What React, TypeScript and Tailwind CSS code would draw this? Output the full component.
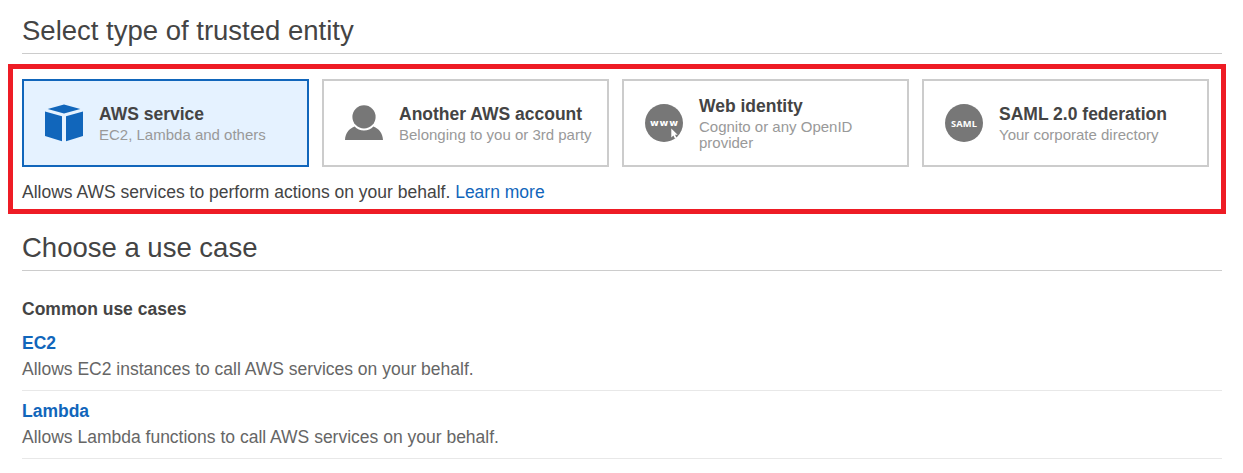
import React from "react";

type Entity = {
  title: string;
  detail: string;
  icon: React.ReactNode;
  selected?: boolean;
};

type UseCase = { name: string; description: string };

function CubeIcon() {
  return (
    <svg width="38" height="38" viewBox="0 0 38 38" fill="#1166bb">
      <path d="M19 0.5 35.3 5.1 19 9.6 2.7 5.1z" />
      <path d="M0 7.4 17 12.2V37.2L0 32z" />
      <path d="M38 7.4 21 12.2V37.2L38 32z" />
    </svg>
  );
}

function PersonIcon() {
  return (
    <svg width="38" height="38" viewBox="0 0 38 38" fill="#777777">
      <circle cx="19" cy="12.9" r="11.6" />
      <path d="M0 36C0.3 29.6 3.6 24.9 9.6 22.6C12 25.2 15.2 26.5 19 26.5C22.8 26.5 26 25.2 28.4 22.6C34.4 24.9 37.7 29.6 38 36z" />
    </svg>
  );
}

function WebIcon() {
  return (
    <svg width="38" height="38" viewBox="0 0 38 38">
      <circle cx="19" cy="19" r="19" fill="#777777" />
      <text
        x="19"
        y="21.5"
        textAnchor="middle"
        textLength="28"
        className="font-['DejaVu_Sans',sans-serif] text-[9.5px] font-bold"
        fill="#ffffff"
      >
        www
      </text>
      <path d="M26.3 24.6V33.4L28.4 31.5L29.9 34.6L31.5 33.8L30 30.8H32.6z" fill="#ffffff" />
    </svg>
  );
}

function SamlIcon() {
  return (
    <svg width="38" height="38" viewBox="0 0 38 38">
      <circle cx="19" cy="19" r="19" fill="#777777" />
      <text
        x="19"
        y="22.9"
        textAnchor="middle"
        textLength="26"
        className="font-['Open_Sans',sans-serif] text-[9.3px] font-bold"
        fill="#ffffff"
      >
        SAML
      </text>
    </svg>
  );
}

const entities: Entity[] = [
  { title: "AWS service", detail: "EC2, Lambda and others", icon: <CubeIcon />, selected: true },
  { title: "Another AWS account", detail: "Belonging to you or 3rd party", icon: <PersonIcon /> },
  { title: "Web identity", detail: "Cognito or any OpenID provider", icon: <WebIcon /> },
  { title: "SAML 2.0 federation", detail: "Your corporate directory", icon: <SamlIcon /> },
];

const useCases: UseCase[] = [
  { name: "EC2", description: "Allows EC2 instances to call AWS services on your behalf." },
  { name: "Lambda", description: "Allows Lambda functions to call AWS services on your behalf." },
];

function SectionHeading({ children }: { children: React.ReactNode }) {
  return (
    <h2 className="mx-[14px] h-[54px] w-[1200px] border-b border-[#cccccc] pt-[15px] text-[27.5px] leading-8 font-normal">
      {children}
    </h2>
  );
}

function EntityCard({ title, detail, icon, selected }: Entity) {
  return (
    <button
      type="button"
      className={
        selected
          ? "flex h-[88px] w-[287px] items-center gap-4 border-2 border-[#1166bb] bg-[#e5f2ff] pr-[14px] pl-[21px] text-left"
          : "flex h-[88px] w-[287px] items-center gap-4 border-2 border-[#cccccc] bg-white pr-[14px] pl-[21px] text-left"
      }
    >
      <span className="shrink-0">{icon}</span>
      <span className="flex flex-1 flex-col">
        <span className="mb-0.5 leading-[22px] font-bold whitespace-nowrap">{title}</span>
        <span className="text-[15px] leading-4 text-[#999999]">{detail}</span>
      </span>
    </button>
  );
}

export default function App() {
  return (
    <main className="h-[473px] w-[1243px] overflow-hidden bg-white pl-2 font-['Liberation_Sans',Arial,sans-serif] text-[17.5px] leading-5 text-[#444444]">
      <SectionHeading>Select type of trusted entity</SectionHeading>

      <section className="mt-[10px] mb-[3px] h-[150px] w-[1218px] border-5 border-[#ee1c25] px-[9px] pt-[10px]">
        <div className="flex gap-[13px]">
          {entities.map((entity) => (
            <EntityCard key={entity.title} {...entity} />
          ))}
        </div>
        <p className="mt-[15px]">
          Allows AWS services to perform actions on your behalf.{" "}
          <a href="#" className="text-[#1166bb]">
            Learn more
          </a>
        </p>
      </section>

      <SectionHeading>Choose a use case</SectionHeading>

      <section className="mx-[14px] w-[1200px] pt-7">
        <h3 className="mb-1 font-bold">Common use cases</h3>
        <ul>
          {useCases.map((item) => (
            <li key={item.name} className="flex h-[68px] flex-col gap-1.5 border-b border-[#e8e8e8] pt-[10px]">
              <a href="#" className="font-bold text-[#1166bb]">
                {item.name}
              </a>
              <p className="text-[#666666]">{item.description}</p>
            </li>
          ))}
        </ul>
      </section>
    </main>
  );
}
